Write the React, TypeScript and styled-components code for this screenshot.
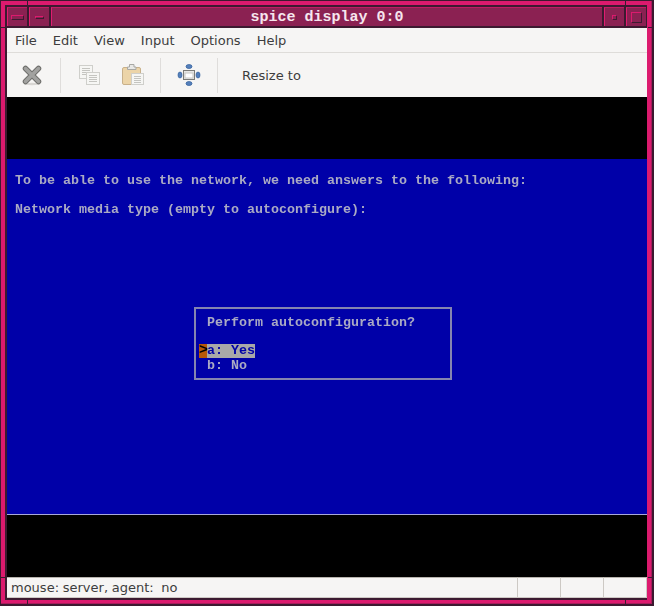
import React from "react";
import styled, { createGlobalStyle } from "styled-components";

const PINK = "#dc1a6e";
const DARK = "#3c1a30";
const TITLE = "#8b2152";

const GlobalStyle = createGlobalStyle`
  html, body {
    margin: 0;
    padding: 0;
    background: ${DARK};
  }
`;

const Frame = styled.div`
  position: relative;
  width: 654px;
  height: 606px;
  box-sizing: border-box;
  padding: 1px 2px 2px 1px;
  background: ${DARK};
  overflow: hidden;
`;

const Border = styled.div`
  height: 603px;
  box-sizing: border-box;
  padding: 4px 4px 3px 4px;
  background: ${PINK};
  border-right: 1px solid #a81c5c;
  border-bottom: 1px solid #a81c5c;
`;

const Inner = styled.div`
  height: 100%;
  box-sizing: border-box;
  padding: 2px 0 2px 2px;
  background: ${DARK};
  display: flex;
  flex-direction: column;
`;

// small cuts in the window border, where corner grips meet the sides
const Notch = styled.div<{ $side: "top" | "bottom" | "left" | "right"; $at: number }>`
  position: absolute;
  background: ${DARK};
  ${(p) =>
    p.$side === "top" || p.$side === "bottom"
      ? `left: ${p.$at}px; width: 1px; height: 6px; ${p.$side}: 0;`
      : `top: ${p.$at}px; height: 1px; width: 6px; ${p.$side}: 0;`}
`;

const TitleBar = styled.div`
  display: flex;
  height: 19px;
  gap: 2px;
  margin-bottom: 2px;
  padding-right: 1px;
  flex: none;
`;

const TitleCell = styled.div<{ $w?: number }>`
  box-sizing: border-box;
  height: 19px;
  width: ${(p) => (p.$w ? p.$w + "px" : "auto")};
  flex: ${(p) => (p.$w ? "none" : "1")};
  background: ${TITLE};
  border-top: 1px solid #c01c64;
  border-left: 1px solid #e01c70;
  display: flex;
  align-items: center;
  justify-content: center;
`;

const TitleText = styled.span`
  font-family: "Liberation Mono", monospace;
  font-weight: 700;
  font-size: 15px;
  line-height: 17px;
  color: #f6e6ee;
`;

const GlyphBar = styled.div<{ $w: number; $h: number }>`
  box-sizing: border-box;
  width: ${(p) => p.$w}px;
  height: ${(p) => p.$h}px;
  border: 1px solid ${PINK};
  border-right-color: ${DARK};
  border-bottom-color: ${DARK};
`;

const Window = styled.div`
  flex: 1;
  display: flex;
  flex-direction: column;
  min-height: 0;
`;

const MenuBar = styled.div`
  height: 25px;
  flex: none;
  box-sizing: border-box;
  padding-left: 8px;
  display: flex;
  align-items: center;
  gap: 16px;
  background: #f6f5f4;
  border-bottom: 1px solid #dedcd9;
  font-family: "DejaVu Sans", sans-serif;
  font-size: 13px;
  color: #3d3d3d;
`;

const ToolBar = styled.div`
  height: 44px;
  flex: none;
  display: flex;
  align-items: center;
  background: #f6f5f4;
`;

const IconSlot = styled.div<{ $w: number; $pr?: number }>`
  box-sizing: border-box;
  width: ${(p) => p.$w}px;
  padding-right: ${(p) => p.$pr ?? 0}px;
  display: flex;
  justify-content: center;
  align-items: center;
`;

const Sep = styled.div`
  width: 1px;
  height: 35px;
  background: #dfdddb;
  flex: none;
`;

const ToolLabel = styled.span`
  margin-left: 24px;
  font-family: "DejaVu Sans", sans-serif;
  font-size: 13px;
  color: #3d3d3d;
`;

const BlackBand = styled.div<{ $h: number }>`
  height: ${(p) => p.$h}px;
  flex: none;
  background: #000;
`;

const Screen = styled.div`
  height: 356px;
  flex: none;
  box-sizing: border-box;
  background: #0000a8;
  border-bottom: 1px solid #a8a8d8;
  padding: 15px 8px 0 8px;
  font-family: "Liberation Mono", monospace;
  font-weight: 700;
  font-size: 13.33px;
  line-height: 14.25px;
  color: #aaaac4;
  white-space: pre;
  filter: blur(0.35px);
`;

const Line = styled.div<{ $gap?: number }>`
  margin-bottom: ${(p) => p.$gap ?? 0}px;
`;

const Dialog = styled.div`
  box-sizing: border-box;
  width: 258px;
  height: 73px;
  margin: 90px 0 0 179px;
  border: 2px solid #8484b0;
  padding: 7px 0 0 3px;
`;

const Option = styled.div<{ $on?: boolean }>`
  display: flex;
  width: 56px;
  height: 14px;
  margin-bottom: ${(p) => (p.$on ? "1px" : "0")};
  background: ${(p) => (p.$on ? "#a8a8a8" : "transparent")};
  color: ${(p) => (p.$on ? "#0000a8" : "#aaaac4")};
`;

const Cursor = styled.span<{ $on?: boolean }>`
  width: 8px;
  font-size: 15px;
  background: ${(p) => (p.$on ? "#b85808" : "transparent")};
  color: #000;
`;

const StatusBar = styled.div`
  flex: 1;
  display: flex;
  box-sizing: border-box;
  background: #f6f5f4;
  font-family: "DejaVu Sans", sans-serif;
  font-size: 13px;
  word-spacing: -0.4px;
  color: #3d3d3d;
`;

const StatusCell = styled.div<{ $w?: number }>`
  box-sizing: border-box;
  flex: ${(p) => (p.$w ? `0 0 ${p.$w}px` : "1")};
  padding-left: 4px;
  display: flex;
  align-items: center;
  border: 1px solid #cdc9c4;
  border-left: none;
  border-top-color: #b8b4ae;
  white-space: pre;
`;

const StopIcon = () => (
  <svg width="22" height="22" viewBox="0 0 22 22">
    <ellipse cx="11" cy="20" rx="8" ry="1.2" fill="#d8d6d3" />
    <path d="M4.5 4.5 L17.5 17.5 M17.5 4.5 L4.5 17.5" stroke="#6f6f6c" strokeWidth="5.5" strokeLinecap="round" />
    <path d="M4.5 4.5 L17.5 17.5 M17.5 4.5 L4.5 17.5" stroke="#a2a2a0" strokeWidth="3.5" strokeLinecap="round" />
  </svg>
);

const Sheet = ({ x, y, w, h }: { x: number; y: number; w: number; h: number }) => (
  <g>
    <rect x={x + 0.5} y={y + 0.5} width={w} height={h} fill="#f6f6f4" stroke="#cfcfcb" />
    {[3, 5, 7, 9].map((d) => (
      <path key={d} d={`M${x + 3} ${y + d + 0.5} H${x + w - 2}`} stroke="#c4c4c0" />
    ))}
  </g>
);

const CopyIcon = () => (
  <svg width="22" height="22" viewBox="0 0 22 22">
    <Sheet x={1} y={1} w={13} h={13} />
    <Sheet x={8} y={8} w={13} h={12} />
  </svg>
);

const PasteIcon = () => (
  <svg width="22" height="22" viewBox="0 0 22 22">
    <rect x="0.5" y="3.5" width="18" height="17" rx="1.5" fill="#ecd4a8" stroke="#c8b08a" />
    <path d="M5.5 5.5 V3 H7.5 V0.5 H12 V3 H14 V5.5 Z" fill="#e8e8e6" stroke="#a8a8a4" />
    <Sheet x={9} y={9} w={12} h={11} />
  </svg>
);

const FitIcon = () => (
  <svg width="24" height="24" viewBox="0 0 24 24">
    <ellipse cx="12" cy="3.5" rx="3" ry="2" fill="#5580bb" stroke="#34609c" strokeWidth="0.7" />
    <ellipse cx="12" cy="20.5" rx="3" ry="2" fill="#5580bb" stroke="#34609c" strokeWidth="0.7" />
    <ellipse cx="3" cy="12" rx="2" ry="3" fill="#5580bb" stroke="#34609c" strokeWidth="0.7" />
    <ellipse cx="21" cy="12" rx="2" ry="3" fill="#5580bb" stroke="#34609c" strokeWidth="0.7" />
    <rect x="6.5" y="7.5" width="11" height="9" fill="#e8e8e6" stroke="#7c7c78" />
    <rect x="8" y="10" width="8" height="5" fill="#fff" stroke="#c8c8c4" />
  </svg>
);

export default function App() {
  return (
    <Frame>
      <GlobalStyle />
      <Border>
        <Inner>
          <TitleBar>
            <TitleCell $w={20}>
              <GlyphBar $w={13} $h={5} />
            </TitleCell>
            <TitleCell $w={20}>
              <GlyphBar $w={9} $h={3} />
            </TitleCell>
            <TitleCell>
              <TitleText>spice display 0:0</TitleText>
            </TitleCell>
            <TitleCell $w={20}>
              <GlyphBar $w={5} $h={5} />
            </TitleCell>
            <TitleCell $w={20}>
              <GlyphBar $w={11} $h={11} />
            </TitleCell>
          </TitleBar>
          <Window>
            <MenuBar>
              <span>File</span>
              <span>Edit</span>
              <span>View</span>
              <span>Input</span>
              <span>Options</span>
              <span>Help</span>
            </MenuBar>
            <ToolBar>
              <IconSlot $w={53} $pr={3}>
                <StopIcon />
              </IconSlot>
              <Sep />
              <IconSlot $w={56}>
                <CopyIcon />
              </IconSlot>
              <IconSlot $w={43} $pr={11}>
                <PasteIcon />
              </IconSlot>
              <Sep />
              <IconSlot $w={56}>
                <FitIcon />
              </IconSlot>
              <Sep />
              <ToolLabel>Resize to</ToolLabel>
            </ToolBar>
            <BlackBand $h={62} />
            <Screen>
              <Line $gap={14.25}>To be able to use the network, we need answers to the following:</Line>
              <Line>Network media type (empty to autoconfigure):</Line>
              <Dialog>
                <Line $gap={14}>{" "}Perform autoconfiguration?</Line>
                <Option $on>
                  <Cursor $on>{">"}</Cursor>a: Yes
                </Option>
                <Option>
                  <Cursor />b: No
                </Option>
              </Dialog>
            </Screen>
            <BlackBand $h={62} />
            <StatusBar>
              <StatusCell>mouse: server, agent:  no</StatusCell>
              <StatusCell $w={43} />
              <StatusCell $w={43} />
              <StatusCell $w={43} />
            </StatusBar>
          </Window>
        </Inner>
      </Border>
      <Notch $side="top" $at={27} />
      <Notch $side="top" $at={625} />
      <Notch $side="bottom" $at={27} />
      <Notch $side="bottom" $at={625} />
      <Notch $side="left" $at={27} />
      <Notch $side="left" $at={577} />
      <Notch $side="right" $at={27} />
      <Notch $side="right" $at={577} />
    </Frame>
  );
}
